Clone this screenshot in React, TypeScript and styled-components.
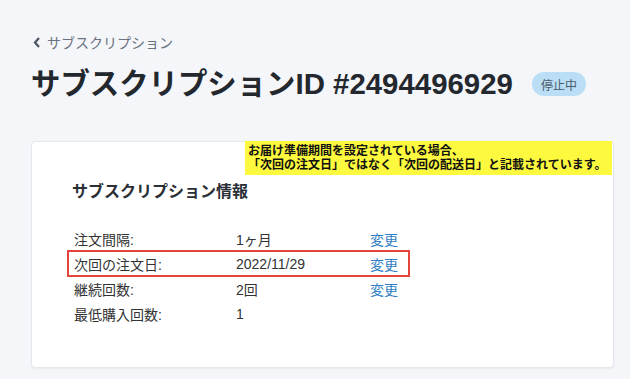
import React from "react";
import styled, { createGlobalStyle } from "styled-components";

const GlobalStyle = createGlobalStyle`
  body {
    margin: 0;
    background: #f4f6f9;
    font-family: "Liberation Sans", "Noto Sans CJK JP", sans-serif;
    color: #222;
  }
`;

const Page = styled.div`
  padding: 32px 16px 20px 31px;
`;

const BackLink = styled.a`
  display: flex;
  align-items: center;
  gap: 6px;
  height: 20px;
  font-size: 14px;
  color: #6b7280;
  text-decoration: none;
  padding-left: 2px;
`;

const TitleRow = styled.div`
  display: flex;
  align-items: center;
  gap: 19px;
  margin-top: 16px;
`;

const Title = styled.h1`
  margin: 0;
  font-size: 29.4px;
  line-height: 32px;
  font-weight: 700;
  color: #23272e;
`;

const Badge = styled.span`
  display: inline-flex;
  align-items: center;
  height: 24px;
  padding: 0 9px;
  border-radius: 12px;
  background: #b9def5;
  color: #4b5b6b;
  font-size: 12px;
`;

const Card = styled.section`
  position: relative;
  margin-top: 41px;
  background: #fff;
  border: 1px solid #e4e7ec;
  border-radius: 4px;
  box-shadow: 0 1px 2px rgba(0, 0, 0, 0.05);
  padding: 38px 40px 41px;
`;

const Note = styled.div`
  position: absolute;
  top: -1px;
  right: 1px;
  width: 361px;
  padding: 3px 3px 3px;
  background: #fdf93e;
  color: #111;
  font-size: 12px;
  line-height: 14px;
  font-weight: 700;
  white-space: nowrap;
`;

const CardTitle = styled.h2`
  margin: 0 0 22px;
  font-size: 16px;
  line-height: 24px;
  font-weight: 700;
  color: #2a2e35;
`;

const Rows = styled.div`
  margin-left: -4px;
  width: 341px;
`;

const Row = styled.div<{ $highlight?: boolean }>`
  display: grid;
  grid-template-columns: 162px 134px 1fr;
  align-items: center;
  height: 25px;
  padding-left: 6px;
  font-size: 14px;
  color: #333;
  outline: ${(p) => (p.$highlight ? "2px solid #e2453b" : "none")};
  outline-offset: -1px;
`;

const ChangeLink = styled.a`
  color: #2f7ec3;
  text-decoration: none;
`;

const rows = [
  { label: "注文間隔:", value: "1ヶ月", change: true },
  { label: "次回の注文日:", value: "2022/11/29", change: true, highlight: true },
  { label: "継続回数:", value: "2回", change: true },
  { label: "最低購入回数:", value: "1", change: false },
];

export default function App() {
  return (
    <>
      <GlobalStyle />
      <Page>
        <BackLink href="#">
          <svg width="8" height="11" viewBox="0 0 8 11">
            <polyline
              points="6,1 2,5.5 6,10"
              fill="none"
              stroke="#4b5563"
              strokeWidth="2.2"
            />
          </svg>
          サブスクリプション
        </BackLink>
        <TitleRow>
          <Title>サブスクリプションID #2494496929</Title>
          <Badge>停止中</Badge>
        </TitleRow>
        <Card>
          <Note>
            お届け準備期間を設定されている場合、
            <br />
            「次回の注文日」ではなく「次回の配送日」と記載されています。
          </Note>
          <CardTitle>サブスクリプション情報</CardTitle>
          <Rows>
            {rows.map((r) => (
              <Row key={r.label} $highlight={r.highlight}>
                <span>{r.label}</span>
                <span>{r.value}</span>
                {r.change ? <ChangeLink href="#">変更</ChangeLink> : <span />}
              </Row>
            ))}
          </Rows>
        </Card>
      </Page>
    </>
  );
}
